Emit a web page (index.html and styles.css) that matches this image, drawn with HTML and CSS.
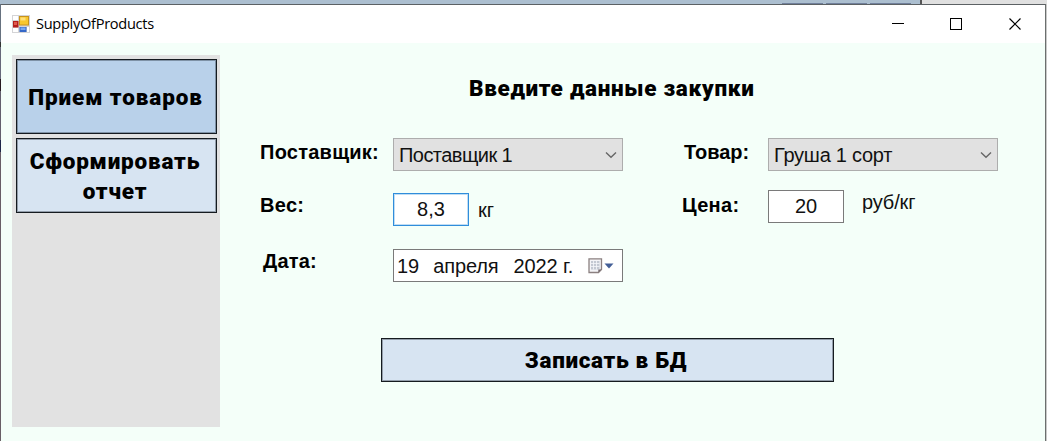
FILE: index.html
```html
<!DOCTYPE html>
<html lang="ru">
<head>
<meta charset="utf-8">
<title>SupplyOfProducts</title>
<link rel="stylesheet" href="styles.css">
</head>
<body>
<div class="backdrop"><i></i><i></i><i></i></div>
<div class="desktop">
<div class="edge"></div>
<div class="window">
  <header class="titlebar">
    <svg class="app-icon" width="18" height="18" viewBox="0 0 18 18">
      <rect width="18" height="18" fill="#d4d4d6"/>
      <path d="M1 1h5v4H1zM1 13h5v4H1zM15 12h2v5h-2z" fill="#fff"/>
      <rect x="7" y="1" width="10" height="9.5" fill="#c8931c"/>
      <rect x="8" y="2" width="8" height="7.5" fill="#f7c72e"/>
      <rect x="8.5" y="2.5" width="5" height="3" fill="#ffe07a"/>
      <rect x="1" y="6" width="5.5" height="6.500" fill="#b51f1c"/>
      <rect x="2" y="7" width="3" height="3" fill="#df5a4d"/>
      <rect x="7.500" y="12" width="7" height="5" fill="#3568c8"/>
      <rect x="8.500" y="12.500" width="5" height="2.500" fill="#74a6f2"/>
    </svg>
    <span class="title">SupplyOfProducts</span>
    <svg class="controls" width="130" height="14" viewBox="0 0 130 14" fill="none" stroke="#000" shape-rendering="crispEdges">
      <path d="M0 6.500h12M58.500 1.500h11v11h-11z"/>
      <path d="M117.500 1.500l11 11M128.500 1.500l-11 11" shape-rendering="auto" stroke-width="1.200"/>
    </svg>
  </header>
  <div class="content">
    <nav class="sidebar">
      <button class="btn nav active"><span class="t-nav1">Прием товаров</span></button>
      <button class="btn nav"><span class="t-nav2">Сформировать<br>отчет</span></button>
    </nav>
    <main class="main">
      <h1 class="heading">Введите данные закупки</h1>
      <div class="row row-1">
        <label class="t-supplier">Поставщик:</label>
        <div class="select"><span class="t-supval">Поставщик 1</span><svg width="12" height="8" viewBox="0 0 12 8"><path d="M1 1.500l5 4.700 5-4.700" fill="none" stroke="#666" stroke-width="1.400"/></svg></div>
        <label class="t-product">Товар:</label>
        <div class="select"><span class="t-prodval">Груша 1 сорт</span><svg width="12" height="8" viewBox="0 0 12 8"><path d="M1 1.500l5 4.700 5-4.700" fill="none" stroke="#666" stroke-width="1.400"/></svg></div>
      </div>
      <div class="row row-2">
        <label class="t-weight">Вес:</label>
        <div class="field"><div class="input focus">8,3</div><span class="unit kg">кг</span></div>
        <label class="t-price">Цена:</label>
        <div class="field"><div class="input price">20</div><span class="unit rub">руб/кг</span></div>
      </div>
      <div class="row row-3">
        <label class="t-date">Дата:</label>
        <div class="date"><span class="day">19</span><span class="month">апреля</span><span class="year">2022 г.</span>
          <svg width="27" height="16" viewBox="0 0 27 16"><path d="M1 .8h12.500v10.700l-3 3H1z" fill="#f4f4f7" stroke="#8b8080" stroke-width="1.300"/><path d="M3 3h8.500v8.500H3z" fill="#c3c8d2"/><path d="M5.500 3v8.500M8.500 3v8.500M3 5.500h8.500M3 8.500h8.500" stroke="#f5f6fa" stroke-width=".8"/><path d="M10.300 14.500v-3h3.200z" fill="#756b6f"/><path d="M16.500 5.500h9l-4.500 5z" fill="#435e96"/></svg>
        </div>
      </div>
      <button class="btn save"><span class="t-save">Записать в БД</span></button>
    </main>
  </div>
</div>
</div>
</body>
</html>
```
FILE: styles.css
```css
* { box-sizing: border-box; }
body {
  margin: 0;
  width: 1047px;
  height: 441px;
  overflow: hidden;
  background: #c9c9c9;
  font-family: "Liberation Sans", sans-serif;
  color: #111;
}
.backdrop {
  height: 4px;
  display: flex;
  gap: 3px;
  align-items: flex-end;
  padding-left: 782px;
  background: linear-gradient(90deg, #acbfd0 0 920px, #555 920px 922px, #e0e0e0 922px);
}
.backdrop i { width: 41px; height: 1px; background: #71809b; }
.desktop { display: flex; height: 437px; }
.edge {
  width: 1px;
  background: linear-gradient(#66717f 0 38px, #333 38px 43px, #66697a 43px 75px, #261b20 75px 87px, #62606d 87px 136px, #1d2848 136px 148px, #685f66 148px);
}
.window {
  width: 1045px;
  border-top: 1px solid #5c6164;
  border-right: 1px solid #6b6f6e;
  background: #f4fff9;
}
.titlebar {
  height: 38px;
  display: flex;
  align-items: center;
  padding: 0 23px 0 11px;
  background: #fff;
}
.title { margin: -2px auto 0 6px; font: 14.6px "Open Sans", sans-serif; letter-spacing: -0.3px; color: #000; }
.content { display: flex; padding: 12px 0 0 11px; }
.sidebar {
  width: 208px;
  height: 372px;
  padding: 4px 3px 0 4px;
  display: flex;
  flex-direction: column;
  gap: 4px;
  background: #e2e2e2;
}
.btn {
  display: flex;
  align-items: center;
  justify-content: center;
  padding: 0;
  border: 1px solid #151b20;
  box-shadow: inset 0 0 0 1px rgba(20, 30, 40, 0.35);
  background: #d7e4f2;
  font: 900 22.5px/30px Roboto, sans-serif;
  color: #000;
}
.nav { height: 75px; }
.active { background: #b9d1ea; }
.t-nav1 { letter-spacing: 0.9px; margin-right: 2px; }
.t-nav2 { letter-spacing: 0.8px; margin-right: 3px; }
.t-save { letter-spacing: 0.65px; margin-right: 3px; }
.main { width: 800px; padding-left: 40px; }
.heading {
  margin: 18px 0 0 209px;
  font: 900 22.5px/30px Roboto, sans-serif;
  letter-spacing: 0.7px;
  color: #000;
  white-space: nowrap;
}
.row {
  display: grid;
  grid-template-columns: 133px 289px 86px 229px;
  grid-column-gap: 0;
  font-size: 20px;
  line-height: 24px;
  white-space: nowrap;
}
.row { grid-template-columns: 133px 289px 86px 230px; }
.row label { font-weight: bold; justify-self: start; color: #000; }
.row-1 { margin-top: 35px; height: 52px; }
.row-2 { height: 59px; }
.row-3 { height: 89px; }
.select, .date {
  width: 229.5px;
  height: 33px;
  display: flex;
  align-items: center;
  justify-content: space-between;
  padding: 1px 5px;
  border: 1px solid #adadad;
  background: #e1e1e1;
}
.field { display: flex; align-items: flex-start; }
.input {
  width: 76px;
  height: 33px;
  margin-top: 3px;
  border: 1px solid #7a7a7a;
  background: #fff;
  text-align: center;
  line-height: 30px;
}
.focus { border-color: #2f8ddb; box-shadow: inset 0 0 0 1px rgba(47, 141, 219, 0.3); }
.price { margin-top: 0; }
.unit { margin: 8px 0 0 9px; }
.rub { margin: 0 0 0 18px; letter-spacing: -0.15px; }
.date { background: #fff; border-color: #7a7a7a; justify-content: flex-start; padding: 1px 7px 1px 3px; }
.month { margin-left: 14px; letter-spacing: -0.15px; }
.year { margin-left: 15px; letter-spacing: -0.1px; }
.date svg { margin-left: auto; }
.t-supplier { padding-top: 2px; letter-spacing: 0.25px; }
.t-product { padding: 2px 0 0 2px; }
.t-weight, .t-price { padding-top: 3px; letter-spacing: 0.3px; }
.t-date { padding: 0 0 0 3px; letter-spacing: 0.2px; }
.t-supval { letter-spacing: -0.55px; }
.t-prodval { letter-spacing: -0.25px; }
.save { width: 453px; height: 44px; margin-left: 121px; }
```
